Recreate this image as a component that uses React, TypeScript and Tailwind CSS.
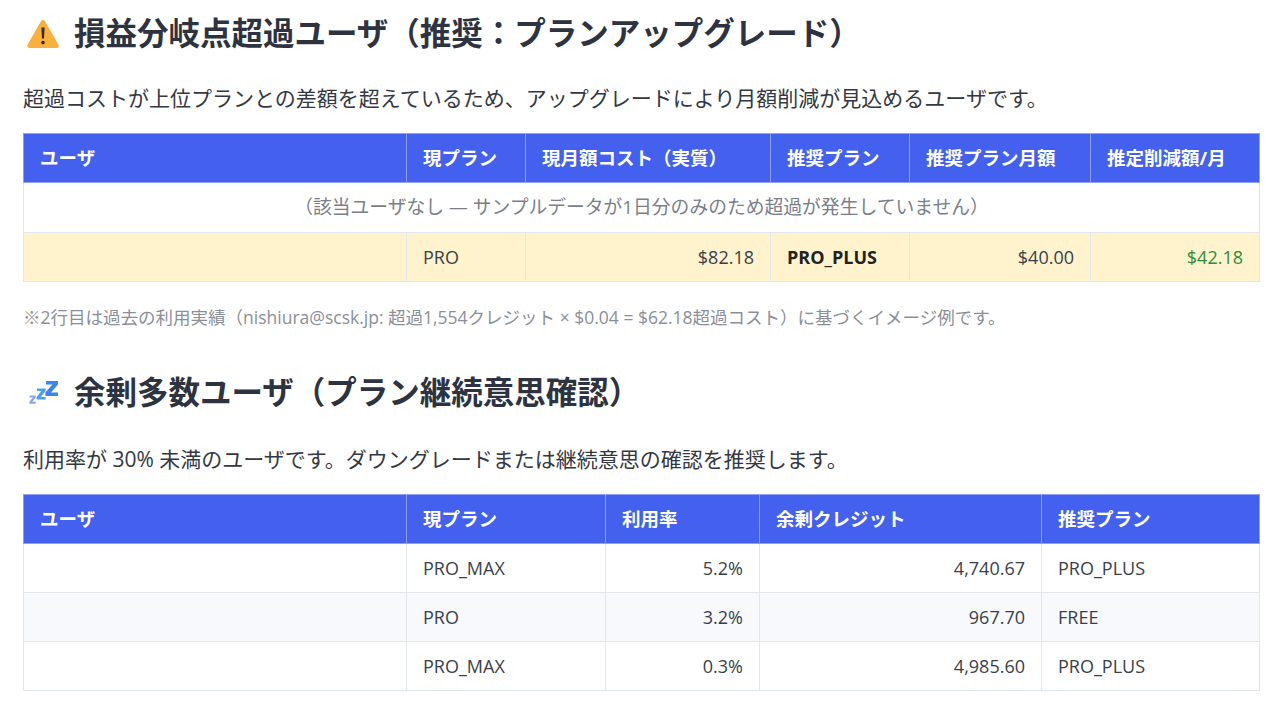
const FONT = '"Open Sans", "Noto Sans CJK JP", sans-serif';

function WarningIcon() {
  return (
    <svg width="34" height="30" viewBox="0 0 34 30" className="shrink-0">
      <path
        d="M15 3.2c.9-1.6 3.1-1.6 4 0l13.4 23.2c.9 1.6-.2 3.6-2 3.6H3.6c-1.8 0-2.9-2-2-3.6z"
        fill="#F7B13C"
      />
      <path d="M15.4 9.5h3.2l-.6 11h-2z" fill="#3b2a14" />
      <circle cx="17" cy="24.6" r="1.8" fill="#3b2a14" />
    </svg>
  );
}

function SleepIcon() {
  return (
    <svg width="34" height="30" viewBox="0 0 34 30" className="shrink-0">
      <path d="M20 4h12v3.4l-7 8.2h7V19H19.4v-3.4l7-8.2H20z" fill="#3B86F0" />
      <path d="M11 11.5h8.6v2.6l-4.9 5.8h4.9v2.6h-9v-2.6l4.9-5.8H11z" fill="#45A0F6" />
      <path d="M3.6 18.5h6.2v2l-3.5 4.2h3.5v2H3.4v-2l3.5-4.2H3.6z" fill="#8AA6EA" />
    </svg>
  );
}

function Heading({ icon, children }: { icon: React.ReactNode; children: React.ReactNode }) {
  return (
    <h2 className="flex items-center gap-[14px] pl-[3px] text-[31.5px] font-bold leading-[38px] text-[#2d3340]">
      {icon}
      <span>{children}</span>
    </h2>
  );
}

const th =
  "h-[49px] border border-[#8ea0f5] bg-[#4361ee] px-4 text-left text-[18.5px] font-bold text-white";
const cell = "h-[49px] border border-[#e2e6ef] px-4 text-[18px]";
const td = `${cell} text-[#3a3f4a]`;

export default function App() {
  const lowUsers = [
    { plan: "PRO_MAX", rate: "5.2%", left: "4,740.67", rec: "PRO_PLUS" },
    { plan: "PRO", rate: "3.2%", left: "967.70", rec: "FREE" },
    { plan: "PRO_MAX", rate: "0.3%", left: "4,985.60", rec: "PRO_PLUS" },
  ];

  return (
    <div className="min-h-screen bg-white px-[23px] pt-[14px]" style={{ fontFamily: FONT }}>
      <Heading icon={<WarningIcon />}>損益分岐点超過ユーザ（推奨：プランアップグレード）</Heading>
      <p className="mt-[31px] text-[21px] leading-[30px] text-[#333842]">
        超過コストが上位プランとの差額を超えているため、アップグレードにより月額削減が見込めるユーザです。
      </p>

      <table className="mt-[20px] w-[1236px] table-fixed border-collapse">
        <colgroup>
          <col className="w-[383px]" />
          <col className="w-[119px]" />
          <col className="w-[245px]" />
          <col className="w-[139px]" />
          <col className="w-[181px]" />
          <col className="w-[169px]" />
        </colgroup>
        <thead>
          <tr>
            <th className={th}>ユーザ</th>
            <th className={th}>現プラン</th>
            <th className={th}>現月額コスト（実質）</th>
            <th className={th}>推奨プラン</th>
            <th className={th}>推奨プラン月額</th>
            <th className={th}>推定削減額/月</th>
          </tr>
        </thead>
        <tbody>
          <tr>
            <td
              colSpan={6}
              className="h-[50px] border border-[#e2e6ef] px-4 text-center text-[18.8px] text-[#7a7f88]"
            >
              （該当ユーザなし — サンプルデータが1日分のみのため超過が発生していません）
            </td>
          </tr>
          <tr className="bg-[#fff3cd]">
            <td className={td}></td>
            <td className={td}>PRO</td>
            <td className={`${td} text-right`}>$82.18</td>
            <td className={`${cell} font-bold text-[#222222]`}>PRO_PLUS</td>
            <td className={`${td} text-right`}>$40.00</td>
            <td className={`${cell} text-right text-[#2e8b3a]`}>$42.18</td>
          </tr>
        </tbody>
      </table>

      <p className="mt-[24px] text-[17.5px] leading-[22px] text-[#8a8f98]">
        ※2行目は過去の利用実績（nishiura@scsk.jp: 超過1,554クレジット × $0.04 = $62.18超過コスト）に基づくイメージ例です。
      </p>

      <div className="mt-[45px]">
        <Heading icon={<SleepIcon />}>余剰多数ユーザ（プラン継続意思確認）</Heading>
      </div>
      <p className="mt-[33px] text-[21px] leading-[30px] text-[#333842]">
        利用率が 30% 未満のユーザです。ダウングレードまたは継続意思の確認を推奨します。
      </p>

      <table className="mt-[20px] w-[1236px] table-fixed border-collapse">
        <colgroup>
          <col className="w-[383px]" />
          <col className="w-[199px]" />
          <col className="w-[154px]" />
          <col className="w-[282px]" />
          <col className="w-[218px]" />
        </colgroup>
        <thead>
          <tr>
            <th className={th}>ユーザ</th>
            <th className={th}>現プラン</th>
            <th className={th}>利用率</th>
            <th className={th}>余剰クレジット</th>
            <th className={th}>推奨プラン</th>
          </tr>
        </thead>
        <tbody>
          {lowUsers.map((u, i) => (
            <tr key={i} className={i % 2 === 1 ? "bg-[#f7f9fc]" : "bg-white"}>
              <td className={td}></td>
              <td className={td}>{u.plan}</td>
              <td className={`${td} text-right`}>{u.rate}</td>
              <td className={`${td} text-right`}>{u.left}</td>
              <td className={td}>{u.rec}</td>
            </tr>
          ))}
        </tbody>
      </table>
    </div>
  );
}
